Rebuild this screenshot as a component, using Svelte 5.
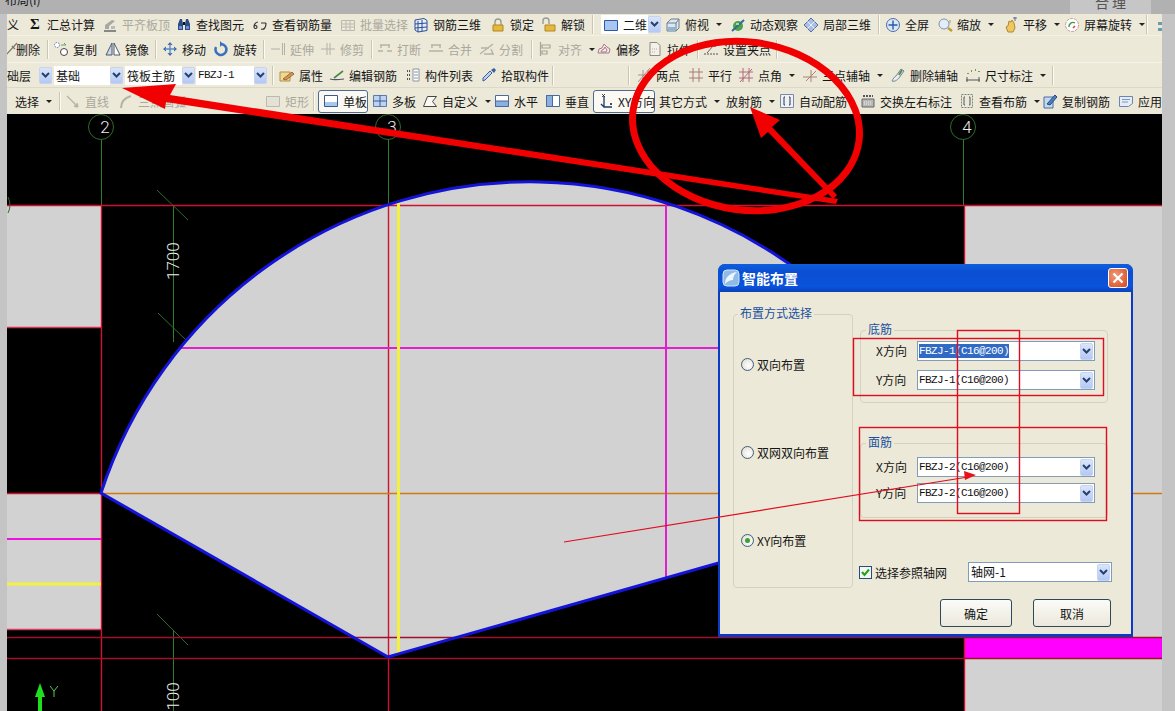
<script>
  // toolbar glyphs, 16x16
  const icons = {
    flat: '<path d="M2 13h12v2H2z" fill="#888"/><path d="M3 12V8l7-5 3 1-6 5v3z" fill="#a8a8a0"/><path d="M9 9h4v3H9z" fill="#bbb"/>',
    find: '<path d="M2 7l2-5h2l1 5v6H2zM9 7l1-5h2l2 5v6H9z" fill="#2a4a88"/><path d="M7 5h2v3H7z" fill="#111"/><path d="M3 9h3v3H3zM10 9h3v3h-3z" fill="#6d8cc8"/>',
    eye: '<path d="M2 10c0-3 2-5 4-5M2 10c0 2 3 2 3 0s-3-2-3 0zM9 12c3 1 5-1 5-6M9 6h5" fill="none" stroke="#333" stroke-width="1.2"/>',
    batch: '<path d="M1.5 3.5h13v10h-13zM1.5 7h13M1.5 10h13M6 3.5v10M10 3.5v10" fill="none" stroke="#bcbab0"/>',
    grid3d: '<path d="M2 3l9-1.5 3 2v10l-9 1.5-3-2zM5 4v11M9 3v11M2 7l12-1M2 11l12-1" fill="#e6ecf8" stroke="#2c4f96"/>',
    lock: '<path d="M5 8V5a3 3 0 0 1 6 0v3" fill="none" stroke="#999" stroke-width="1.4"/><path d="M3 8h10v6H3z" fill="#e8b83c" stroke="#b08820"/>',
    unlock: '<path d="M2 7V4a3 3 0 0 1 6 0v3" fill="none" stroke="#999" stroke-width="1.4"/><path d="M4 8h10v6H4z" fill="#e8b83c" stroke="#b08820"/>',
    rect2d: '<path d="M1.5 3.5h13v10h-13z" fill="#a9c6f0" stroke="#2c5aa8"/>',
    top: '<path d="M2 6l4-4h8v9l-3 3H2z" fill="#dfe7ee" stroke="#6b7f90"/><path d="M2 6h9v8M11 6l3-4" fill="none" stroke="#6b7f90"/><path d="M3 10h7v3H3z" fill="#8fb4dc"/>',
    orbit: '<circle cx="8" cy="9" r="5" fill="#4ea24a"/><path d="M2 14L14 3" stroke="#2d6e9a" stroke-width="2"/><path d="M6 6h3v2H6z" fill="#a9dc9a"/>',
    local: '<path d="M8 1l7 7-7 7-7-7z" fill="#a9bfe4" stroke="#56709e"/><path d="M4.5 4.5l7 7M11.5 4.5l-7 7" stroke="#eef"/>',
    full: '<circle cx="8" cy="8" r="6.5" fill="#dbe7f6" stroke="#4a6ea8"/><path d="M8 3.5v9M3.5 8h9" stroke="#2c5aa8" stroke-width="1.4"/>',
    zoom: '<circle cx="7" cy="7" r="5" fill="#e4ecf8" stroke="#7c93b8"/><path d="M11 11l4 3" stroke="#c09a30" stroke-width="2.4"/><path d="M13 3v3" stroke="#c09a30"/>',
    pan: '<path d="M5 15l-2-5 2-1 1-5 2 1 1-2 2 3 1 5-2 4z" fill="#f0c860" stroke="#b08830"/><path d="M10 1h4M12 0v4" stroke="#668" />',
    rot: '<circle cx="8" cy="8" r="6.5" fill="#fff" stroke="#c49a9a" stroke-dasharray="3 1"/><path d="M5 10a4 4 0 0 1 6-4" fill="none" stroke="#3a9a4a" stroke-width="1.4"/><path d="M11 9l-2 2" stroke="#d04040" stroke-width="1.4"/>',
    cube: '<path d="M3 5h10v3H3zM3 11h10v3H3z" fill="#6a9ab0"/><path d="M8 1v4" stroke="#3a8a4a" stroke-width="2"/>',
    del: '<path d="M14 2L2 15M9 5l3 3" stroke="#7a7a6a" stroke-width="1.3"/>',
    copy: '<circle cx="4" cy="4" r="2.5" fill="#fff" stroke="#5a7aa8" stroke-dasharray="1.5 1"/><circle cx="11" cy="11" r="3.5" fill="#fff" stroke="#444"/><path d="M8 4h5l-2-2" fill="none" stroke="#5aa85a"/>',
    mirror: '<path d="M7 2L1 14h6z" fill="#cfd8e4" stroke="#4a5a70"/><path d="M9 2l6 12H9z" fill="#fff" stroke="#4a5a70"/>',
    move: '<path d="M8 1l2.5 3h-5zM8 15l2.5-3h-5zM1 8l3-2.5v5zM15 8l-3-2.5v5z" fill="#3a6ab0"/><path d="M8 3v10M3 8h10" stroke="#5a8ac8" stroke-width="1.4"/>',
    spin: '<path d="M8 3a5.5 5.5 0 1 1-5 3" fill="none" stroke="#3a70c0" stroke-width="2.6"/><path d="M7 0v6l3-3z" fill="#3a70c0"/>',
    extend: '<path d="M1 8h9M12.5 2v12M14.5 2v12" stroke="#b4b2a6"/>',
    trim: '<path d="M1 8h14M7 2v12M10 2v12" stroke="#b4b2a6"/>',
    brk: '<path d="M1 10h5M10 10h5M3 4h10M4 4v3M12 4v3" stroke="#b4b2a6" stroke-width="1.4"/>',
    merge: '<path d="M1 10h14M3 4h10M4 4v3M12 4v3" stroke="#b4b2a6" stroke-width="1.4"/>',
    split: '<path d="M1 13L14 3M2 7h8M5 13h10M12 8l2 5" stroke="#b4b2a6" stroke-width="1.4"/>',
    align: '<path d="M2.5 1v14M4 4h8v3H4zM4 10h5v3H4z" fill="none" stroke="#a8a69a" stroke-width="1.2"/>',
    offset: '<path d="M2 12l1-4 3-1 2-4 3 3 3 2-1 4z" fill="#f4e8e8" stroke="#a87a88"/><path d="M5 11l1-2 2-1 1-2 2 3-1 2z" fill="none" stroke="#a87a88"/>',
    stretch: '<path d="M3 1.5h7l3 3v10H3z" fill="#f4f2e8" stroke="#8a8a80"/><path d="M5 8h6M5 11h4" stroke="#aaa" stroke-dasharray="1 1"/>',
    grips: '<path d="M1 13h14" stroke="#555" stroke-dasharray="2 1"/><path d="M4 12l6-7" stroke="#666"/><path d="M10 3h3v3h-3z" fill="#888"/>',
    prop: '<path d="M1 5h10v9H1z" fill="#f0d890" stroke="#b09040"/><path d="M4 12l9-7 2 2-8 6z" fill="#e09050" stroke="#907040"/>',
    edit: '<path d="M1 12c3 1 7 1 14 0" fill="none" stroke="#556" stroke-width="1.2"/><path d="M5 11l9-7" stroke="#4a8a4a" stroke-width="1.6"/>',
    list: '<path d="M8 2h6v12H8z" fill="#fff" stroke="#8a94a0"/><path d="M9 5h4M9 8h4M9 11h4" stroke="#8a94a0"/><path d="M2 4h3M2 8h3M2 12h3" stroke="#555" stroke-dasharray="1 1" stroke-width="2"/>',
    pick: '<path d="M2 14l2-1 7-7-2-2-7 7z" fill="#bcd0ec" stroke="#3a60a0"/><path d="M10 3l3 3 2-3-2-2z" fill="#3a60a0"/>',
    two: '<path d="M2 15L14 1M7 3v12M12 3v12M2 8h12" stroke="#a89088"/>',
    para: '<path d="M1 5h14M1 11h14M5 1v14M11 1v14" stroke="#a87a7a"/>',
    angle: '<path d="M1 5h14M1 11h14M5 1v14M11 1v14M2 15L14 2" stroke="#b06a7a"/>',
    three: '<path d="M1 10h14M9 3v12M4 14L14 4" stroke="#b08078"/>',
    delaxis: '<path d="M2 14c3 1 5-1 7-3l5-7-3-2-5 7c-2 1-3 3-4 5z" fill="#e8ecf4" stroke="#788"/><path d="M9 8l3-5" stroke="#5a8a5a" stroke-width="2"/>',
    dim: '<path d="M1 13h14M2 10v5M14 10v5" stroke="#555"/><path d="M3 7v-1M6 4h1M10 3h1M14 4v1" stroke="#7a9a50" stroke-width="2"/>',
    line: '<path d="M2 3l11 11M13 14l-4-1M13 14l-1-4" fill="none" stroke="#b4b2a6" stroke-width="1.3"/>',
    arc: '<path d="M3 15c0-6 3-10 10-12" fill="none" stroke="#b4b2a6" stroke-width="2"/>',
    rectd: '<path d="M1.5 3.5h13v10h-13z" fill="#e4e2d6" stroke="#bcbab0"/>',
    single: '<path d="M1.5 2.5h13v11h-13z" fill="#fff" stroke="#3a5a90"/><path d="M2 9h12v4H2z" fill="#a9c6f0"/>',
    multi: '<path d="M1.5 2.5h13v11h-13z" fill="#bcd4f2" stroke="#5a7ab0"/><path d="M8 2.5v11M1.5 8h13" stroke="#3a5a90"/>',
    custom: '<path d="M1.5 13.5l4-10h9l-4 5 4 5z" fill="#fbfaf2" stroke="#444"/>',
    hor: '<path d="M1.5 2.5h13v11h-13z" fill="#fff" stroke="#4a6aa0"/><path d="M1.5 8h13v5.5h-13z" fill="#8ab0e0" stroke="#4a6aa0"/>',
    ver: '<path d="M1.5 2.5h13v11h-13z" fill="#fff" stroke="#4a6aa0"/><path d="M1.5 2.5h6v11h-6z" fill="#8ab0e0" stroke="#4a6aa0"/>',
    xy: '<path d="M6 3v11h8M6 14l-3-3" fill="none" stroke="#1a3a6a" stroke-width="1.3"/><path d="M4 1l3 3M7 1L4 4M12 10l2 2M14 10l-2 2" stroke="#222" stroke-width=".8"/>',
    auto: '<path d="M1.5 1.5h13v13h-13z" fill="#eef2f8" stroke="#7a8aa8"/><path d="M6 4H5v8h1M10 4h1v8h-1" fill="none" stroke="#334"/>',
    swap: '<path d="M2 6h12v8H2z" fill="#b8b8b4" stroke="#666"/><path d="M3 3h10" stroke="#556" stroke-dasharray="2 1" stroke-width="2"/><path d="M4 9h8M4 11h8" stroke="#eee" stroke-dasharray="1 1"/>',
    view: '<path d="M2.5 1.5h11v13h-11z" fill="none" stroke="#7a8a7a" stroke-dasharray="2 1"/><path d="M6 4H5v8h1M10 4h1v8h-1" fill="none" stroke="#556"/>',
    copyr: '<path d="M2 4h9v11H2z" fill="#c4d8f0" stroke="#4a6aa0"/><path d="M5 11l8-9 2 2-7 8z" fill="#4a80c0" stroke="#2a4a80"/>',
    apply: '<path d="M1.5 3.5h13v7l-4 3h-9z" fill="#e4ecf8" stroke="#6a86b0"/><path d="M4 6.5h8M4 9h6" stroke="#7a96c0"/>'
  };

  // each entry holds its left edge in page pixels, widths come from the next entry
  const it = (x, icon, text, o = {}) => ({ x, icon, text, ...o });
  const sep = (x) => ({ x, sep: true });
  const drop = (x) => ({ x, drop: true });
  const gap = (x) => ({ x });
  const combo = (x, text, o = {}) => ({ x, text, combo: true, ...o });

  const rows = [
    [
      it(7, null, '义'), it(30, null, 'Σ', { sigma: true }), it(47, null, '汇总计算'),
      it(102, 'flat', '平齐板顶', { dis: true }), it(176, 'find', '查找图元'), it(252, 'eye', '查看钢筋量'),
      it(340, 'batch', '批量选择', { dis: true }), it(413, 'grid3d', '钢筋三维'), it(490, 'lock', '锁定'),
      it(541, 'unlock', '解锁'), sep(592), combo(601, '', { icon: 'rect2d', text: '二维' }), drop(648),
      it(665, 'top', '俯视', { arrow: true }), it(730, 'orbit', '动态观察'), it(803, 'local', '局部三维'),
      sep(878), it(885, 'full', '全屏'), it(937, 'zoom', '缩放', { arrow: true }), it(1003, 'pan', '平移', { arrow: true }),
      it(1064, 'rot', '屏幕旋转', { arrow: true }), sep(1146), it(1155, 'cube', '')
    ],
    [
      it(3, 'del', ''), it(16, null, '删除'), sep(47), it(53, 'copy', '复制'), it(105, 'mirror', '镜像'), sep(155),
      it(162, 'move', '移动'), it(213, 'spin', '旋转'), sep(263), it(270, 'extend', '延伸', { dis: true }),
      it(320, 'trim', '修剪', { dis: true }), sep(371), it(377, 'brk', '打断', { dis: true }),
      it(428, 'merge', '合并', { dis: true }), it(479, 'split', '分割', { dis: true }), sep(531),
      it(538, 'align', '对齐', { dis: true, arrow: true }), it(596, 'offset', '偏移'), it(647, 'stretch', '拉伸'),
      sep(697), it(703, 'grips', '设置夹点'), sep(776), gap(790)
    ],
    [
      combo(7, '础层', { plain: true }), drop(39), combo(54, '基础'), drop(110), combo(125, '筏板主筋'), drop(182),
      combo(196, 'FBZJ-1', { mono: true }), drop(254), sep(272), it(279, 'prop', '属性'), it(329, 'edit', '编辑钢筋'),
      it(405, 'list', '构件列表'), it(481, 'pick', '拾取构件'), sep(552), gap(628), sep(628),
      it(636, 'two', '两点'), it(688, 'para', '平行'), it(738, 'angle', '点角', { arrow: true }),
      it(802, 'three', '三点辅轴', { arrow: true }), it(890, 'delaxis', '删除辅轴'), it(965, 'dim', '尺寸标注', { arrow: true }),
      sep(1052), gap(1060)
    ],
    [
      it(15, null, '选择', { arrow: true }), sep(59), it(65, 'line', '直线', { dis: true }), it(118, 'arc', '三点画弧', { dis: true }),
      gap(205), it(265, 'rectd', '矩形', { dis: true }), sep(313), it(318, 'single', '单板', { btn: true }),
      it(372, 'multi', '多板'), it(422, 'custom', '自定义', { arrow: true }), it(494, 'hor', '水平'), it(545, 'ver', '垂直'),
      it(593, 'xy', 'XY方向', { btn: true }), it(659, null, '其它方式', { arrow: true }), it(726, null, '放射筋', { arrow: true }),
      it(779, 'auto', '自动配筋'), it(860, 'swap', '交换左右标注'), it(959, 'view', '查看布筋', { arrow: true }),
      it(1042, 'copyr', '复制钢筋'), it(1118, 'apply', '应用')
    ]
  ];

  const cells = (row) =>
    row.map((c, i) => {
      const next = i + 1 < row.length ? row[i + 1].x : 1162;
      return { ...c, w: next - c.x - (c.btn ? 4 : 0) };
    });

  const radios = [
    { label: '双向布置', on: false },
    { label: '双网双向布置', on: false },
    { label: 'XY向布置', on: true }
  ];
  const groups = [
    { title: '底筋', cls: 'bottom', rows: [['X方向', 'FBZJ-1(C16@200)', true], ['Y方向', 'FBZJ-1(C16@200)', false]] },
    { title: '面筋', cls: 'top', rows: [['X方向', 'FBZJ-2(C16@200)', false], ['Y方向', 'FBZJ-2(C16@200)', false]] }
  ];
  const axes = [['2', 101], ['3', 388], ['4', 963]];
</script>

<div class="page">
  <div class="menubar">
    <span class="menu">布局(I)</span>
    <span class="tab">合 理</span>
  </div>

  <div class="middle">
    <div class="strip left"></div>
    <div class="work">
      <div class="toolbars">
        {#each rows as row, r}
          <div class="row row{r}">
            {#each cells(row) as c}
              <div class="cell" class:combo={c.combo && !c.plain} class:dis={c.dis} class:btn={c.btn} style="width:{c.w}px">
                {#if c.sep}
                  <span class="sep"></span>
                {:else if c.drop}
                  <span class="drop"><svg width="9" height="7" viewBox="0 0 9 7"><path d="M1 1l3.5 3.5L8 1" fill="none" stroke="#26416f" stroke-width="2"/></svg></span>
                {:else}
                  {#if c.icon}
                    <svg class="icon" width="16" height="16" viewBox="0 0 16 16">{@html icons[c.icon]}</svg>
                  {/if}
                  {#if c.text}
                    <span class:mono={c.mono} class:sigma={c.sigma}>{c.text}</span>
                  {/if}
                  {#if c.arrow}<i class="caret"></i>{/if}
                {/if}
              </div>
            {/each}
          </div>
        {/each}
      </div>

      <svg class="canvas" width="1155" height="597" viewBox="7 114 1155 597">
        <rect x="7" y="114" width="1155" height="597" fill="#000" />
        <g fill="#d2d2d2">
          <rect x="7" y="206" width="94" height="121" />
          <rect x="7" y="494" width="94" height="135" />
          <rect x="964" y="206" width="198" height="505" />
          <path d="M101 493A451 451 0 0 1 964 511V493L388 657Z" />
        </g>
        <rect x="964" y="638" width="198" height="20" fill="#ff00ff" />

        <g class="thin" stroke="#2f7d2f">
          <line x1="101.5" y1="140" x2="101.5" y2="205" />
          <line x1="388.5" y1="140" x2="388.5" y2="205" />
          <line x1="963.5" y1="140" x2="963.5" y2="205" />
          <line x1="173.5" y1="205" x2="173.5" y2="342" />
          <line x1="173.5" y1="631" x2="173.5" y2="711" />
        </g>
        <g stroke="#2f6b2f" fill="none">
          {#each axes as [label, x]}
            <circle cx={x} cy="127" r="12.5" />
          {/each}
          <line x1="157" y1="190" x2="188" y2="220" />
          <line x1="158" y1="313" x2="186" y2="340" />
          <line x1="157" y1="614" x2="188" y2="645" />
          <path d="M8 197q4 8 0 16" />
        </g>
        <g class="labels">
          {#each axes as [label, x]}
            <text x={x + 4} y="133" text-anchor="middle">{label}</text>
          {/each}
          <text transform="translate(179 280) rotate(-90)">1700</text>
          <text transform="translate(179 720) rotate(-90)">2100</text>
        </g>

        <g stroke-width="1.4">
          <line x1="7" y1="205.5" x2="1162" y2="205.5" stroke="#d01030" />
          <line x1="7" y1="327.5" x2="101" y2="327.5" stroke="#d83050" />
          <line x1="7" y1="629.5" x2="101" y2="629.5" stroke="#e03860" />
          <line x1="101.5" y1="205" x2="101.5" y2="711" stroke="#d01030" />
          <line x1="388.5" y1="205" x2="388.5" y2="711" stroke="#d01030" />
          <line x1="964.5" y1="205" x2="964.5" y2="711" stroke="#d01030" />
          <line x1="7" y1="637.5" x2="1162" y2="637.5" stroke="#a01028" />
          <line x1="7" y1="658.5" x2="1162" y2="658.5" stroke="#a01028" />
          <line x1="7" y1="493.5" x2="101" y2="493.5" stroke="#d01030" />
          <line x1="101" y1="493.5" x2="1162" y2="493.5" stroke="#d07a10" />
          <line x1="181" y1="348" x2="720" y2="348" stroke="#e020d0" stroke-width="2" />
          <line x1="666" y1="203" x2="666" y2="578" stroke="#e020d0" stroke-width="2" />
          <line x1="7" y1="539" x2="101" y2="539" stroke="#f010e0" stroke-width="2" />
          <line x1="398.5" y1="203" x2="398.5" y2="655" stroke="#f4f040" stroke-width="3" />
          <line x1="7" y1="584" x2="101" y2="584" stroke="#f4f040" stroke-width="3" />
        </g>
        <path d="M388 657L101 493A451 451 0 0 1 964 511V493Z" fill="none" stroke="#1414d8" stroke-width="3" />

        <path d="M40 683l5 14h-3v14h-4v-14h-3z" fill="#1fe01f" />
        <path d="M50 686l4 5 4-5M54 691v6" fill="none" stroke="#5ac85a" />
      </svg>
    </div>
    <div class="strip right"></div>
  </div>

  <div class="dialog">
    <div class="titlebar">
      <svg width="18" height="18" viewBox="0 0 18 18">
        <rect x="1" y="1" width="16" height="16" rx="4" fill="#8fbce6" stroke="#cfe2f6" />
        <path d="M3 15c0-6 4-11 12-12-3 3-4 5-4 8-3 0-5 1-8 4z" fill="#eef6fd" />
      </svg>
      <span class="title">智能布置</span>
      <span class="close">
        <svg width="12" height="12" viewBox="0 0 12 12"><path d="M1.5 1.5l9 9M10.5 1.5l-9 9" stroke="#fff" stroke-width="2.2" /></svg>
      </span>
    </div>
    <div class="dialog-body">
      <fieldset class="mode">
        <legend>布置方式选择</legend>
        {#each radios as radio}
          <div class="radio">
            <span class="dot" class:on={radio.on}></span>
            <span>{radio.label}</span>
          </div>
        {/each}
      </fieldset>

      <div class="side">
        {#each groups as group}
          <fieldset class="bars {group.cls}">
            <legend>{group.title}</legend>
            {#each group.rows as [label, value, selected]}
              <div class="field">
                <span class="field-label">{label}</span>
                <div class="select">
                  <span class="value" class:selected>{value}</span>
                  <span class="drop"><svg width="9" height="7" viewBox="0 0 9 7"><path d="M1 1l3.5 3.5L8 1" fill="none" stroke="#26416f" stroke-width="2"/></svg></span>
                </div>
              </div>
            {/each}
          </fieldset>
        {/each}

        <div class="reference">
          <span class="check"><svg width="11" height="11" viewBox="0 0 11 11"><path d="M2 5l2.5 3L9 2.5" fill="none" stroke="#21a121" stroke-width="2"/></svg></span>
          <span class="check-label">选择参照轴网</span>
          <div class="select grid-select">
            <span class="value cjk">轴网-1</span>
            <span class="drop"><svg width="9" height="7" viewBox="0 0 9 7"><path d="M1 1l3.5 3.5L8 1" fill="none" stroke="#26416f" stroke-width="2"/></svg></span>
          </div>
        </div>

        <div class="actions">
          <button class="ok">确定</button>
          <button class="cancel">取消</button>
        </div>
      </div>
    </div>
  </div>

  <!-- hand drawn markup on top of the screenshot -->
  <svg class="markup" width="1175" height="711" viewBox="0 0 1175 711">
    <ellipse cx="746" cy="126" rx="114" ry="84" transform="rotate(8 746 126)" fill="none" stroke="#f00000" stroke-width="7" />
    <path d="M122 88L176 84 170 95 838 199 836 204 166 102 165 109Z" fill="#f00000" />
    <path d="M750 107L780 120 772 127 837 195 833 199 768 132 761 138Z" fill="#f00000" />
    <g fill="none" stroke="#e00c20" stroke-width="1.4">
      <rect x="853.5" y="338.5" width="250" height="57" />
      <rect x="859.5" y="427.5" width="247" height="93" />
      <rect x="957.5" y="330.5" width="62" height="183" />
      <line x1="564" y1="542" x2="968" y2="477" stroke-width="1.1" />
    </g>
    <path d="M976 475L964 471 965 480Z" fill="#e8101c" />
  </svg>
</div>

<style>
  :global(body) {
    margin: 0;
    background: #000;
  }
  .page {
    position: relative;
    width: 1175px;
    height: 711px;
    overflow: hidden;
    display: flex;
    flex-direction: column;
    font-family: "Noto Sans CJK SC", "Liberation Sans", sans-serif;
    font-size: 12px;
    color: #151515;
  }
  .menubar {
    height: 14px;
    flex: none;
    background: #b1b1b1;
    display: flex;
    justify-content: space-between;
    overflow: hidden;
  }
  .menu {
    margin: -9px 0 0 5px;
    line-height: 17px;
  }
  .tab {
    width: 81px;
    margin-right: 24px;
    background: #c6c6c6;
    text-align: center;
    font-size: 14px;
    line-height: 4px;
    color: #555;
  }
  .middle {
    flex: 1;
    display: flex;
    min-height: 0;
  }
  .strip {
    flex: none;
    background: #c4c4c4;
  }
  .strip.left { width: 7px; }
  .strip.right { width: 13px; }
  .work {
    width: 1155px;
    display: flex;
    flex-direction: column;
  }
  .canvas {
    display: block;
    flex: none;
  }
  .thin line { shape-rendering: crispEdges; }
  .labels text {
    fill: #ececec;
    font-family: Roboto, "Liberation Sans", sans-serif;
    font-weight: 300;
    font-size: 17px;
  }

  .toolbars {
    height: 100px;
    flex: none;
    background: #ece9d9;
    display: flex;
    flex-direction: column;
    overflow: hidden;
  }
  .row {
    display: flex;
    align-items: center;
    white-space: nowrap;
  }
  .row0 { height: 21px; }
  .row1 { height: 27px; margin-left: -4px; border-top: 1px solid #f3f1e6; box-sizing: border-box; }
  .row2 { height: 26px; border-top: 1px solid #f6f4ea; border-bottom: 1px solid #dcd9c8; box-sizing: border-box; }
  .row3 { height: 26px; padding-left: 8px; }
  .cell {
    flex: none;
    box-sizing: border-box;
    display: flex;
    align-items: center;
    height: 100%;
  }
  .cell.dis { color: #aaa89c; }
  .icon {
    flex: none;
    margin-right: 4px;
  }
  .cell.combo {
    height: 19px;
    background: #fff;
    padding-left: 2px;
  }
  .cell.btn {
    height: 23px;
    margin-right: 4px;
    padding-left: 4px;
    border: 1px solid #4f6a8c;
    border-radius: 3px;
    background: #faf9f3;
  }
  .mono {
    font-family: "Liberation Mono", monospace;
    font-size: 11px;
    letter-spacing: -0.6px;
  }
  .sigma {
    font-family: "Liberation Serif", serif;
    font-weight: 700;
    font-size: 15px;
  }
  .caret {
    margin-left: 7px;
    border: 3px solid transparent;
    border-top-color: #222;
    border-bottom: 0;
  }
  .sep {
    width: 1px;
    height: 19px;
    background: #c9c6b3;
    box-shadow: 1px 0 #fbfaf3;
  }
  .drop {
    flex: none;
    width: 13px;
    height: 17px;
    box-sizing: border-box;
    display: flex;
    align-items: center;
    justify-content: center;
    background: linear-gradient(#dbe5fb, #b3c8f4);
    border: 1px solid #c6d4f2;
    border-radius: 2px;
  }

  .dialog {
    position: absolute;
    left: 718px;
    top: 264px;
    width: 415px;
    height: 373px;
    box-sizing: border-box;
    background: #0a3bc6;
    border-radius: 7px 7px 0 0;
    padding: 0 2px 3px;
    display: flex;
    flex-direction: column;
  }
  .titlebar {
    flex: none;
    height: 28px;
    margin: 0 -2px;
    padding: 0 5px 0 4px;
    border-radius: 7px 7px 0 0;
    background: linear-gradient(#0d5fdd, #0b4ed2 30%, #0a53dc 80%, #0a43b8);
    display: flex;
    align-items: center;
    gap: 2px;
  }
  .title {
    color: #fff;
    font-size: 14px;
    font-weight: 700;
    flex: 1;
  }
  .close {
    width: 20px;
    height: 20px;
    box-sizing: border-box;
    display: flex;
    align-items: center;
    justify-content: center;
    border: 1px solid #fff;
    border-radius: 3px;
    background: radial-gradient(circle at 35% 35%, #ee9a78, #d5471f);
  }
  .dialog-body {
    flex: 1;
    background: #ece9d8;
    display: flex;
    align-items: flex-start;
    padding: 12px 0 0 13px;
    min-height: 0;
  }
  fieldset {
    margin: 0;
    padding: 0;
    border: 1px solid #d4d1c0;
    border-radius: 4px;
    box-sizing: border-box;
    min-width: 0;
  }
  legend {
    padding: 0 2px 4px;
    color: #1a4fa0;
    line-height: 17px;
  }
  .mode {
    width: 120px;
    height: 284px;
    flex: none;
    display: flex;
    flex-direction: column;
    gap: 70px;
    padding: 30px 0 0 7px;
  }
  .mode legend { margin-left: -3px; }
  .radio {
    height: 18px;
    display: flex;
    align-items: center;
    gap: 3px;
    white-space: nowrap;
  }
  .dot {
    width: 13px;
    height: 13px;
    box-sizing: border-box;
    flex: none;
    border: 1px solid #3f5f7f;
    border-radius: 50%;
    background: radial-gradient(circle at 60% 60%, #fff, #dcd9c9);
    display: flex;
    align-items: center;
    justify-content: center;
  }
  .dot.on::after {
    content: "";
    width: 5px;
    height: 5px;
    border-radius: 50%;
    background: #3aa03a;
  }
  .side {
    margin-left: 7px;
    width: 260px;
    flex: none;
    display: flex;
    flex-direction: column;
  }
  .bars {
    width: 248px;
    display: flex;
    flex-direction: column;
    padding: 0 12px 0 15px;
  }
  .bars legend { margin-left: -10px; }
  .bottom { gap: 9px; margin-top: 16px; height: 83px; }
  .top { gap: 6px; margin-top: 30px; height: 85px; padding-top: 3px; }
  .field {
    display: flex;
    align-items: center;
    height: 20px;
  }
  .field-label {
    width: 41px;
    flex: none;
    margin-top: -2px;
  }
  .select {
    flex: 1;
    height: 20px;
    box-sizing: border-box;
    background: #fff;
    border: 1px solid #7f9db9;
    display: flex;
    align-items: center;
    justify-content: space-between;
    padding: 0 1px 0 1px;
    min-width: 0;
  }
  .value {
    font-family: "Liberation Mono", monospace;
    font-size: 11px;
    letter-spacing: -0.6px;
    line-height: 14px;
    color: #111;
  }
  .value.cjk {
    font-family: "Noto Sans CJK SC", sans-serif;
    font-size: 12px;
    letter-spacing: 0;
    padding-left: 1px;
  }
  .value.selected {
    background: #316ac5;
    color: #fff;
  }
  .reference {
    display: flex;
    align-items: center;
    height: 20px;
    margin: 44px 0 0 -1px;
    gap: 3px;
  }
  .check {
    width: 13px;
    height: 13px;
    box-sizing: border-box;
    flex: none;
    background: #f6f5ee;
    border: 1px solid #1c5180;
    display: flex;
    align-items: center;
    justify-content: center;
  }
  .check-label { white-space: nowrap; }
  .grid-select {
    flex: none;
    width: 144px;
    margin-left: 18px;
  }
  .actions {
    display: flex;
    margin-top: 17px;
    padding-left: 80px;
    gap: 21px;
  }
  button {
    height: 28px;
    box-sizing: border-box;
    padding: 0;
    border: 1px solid #2c4a5a;
    border-radius: 3px;
    background: linear-gradient(#fbfbf7, #ebe8dc);
    font: inherit;
    color: #111;
  }
  .ok { width: 72px; }
  .cancel { width: 78px; }
  .markup {
    position: absolute;
    left: 0;
    top: 0;
    pointer-events: none;
  }
</style>
